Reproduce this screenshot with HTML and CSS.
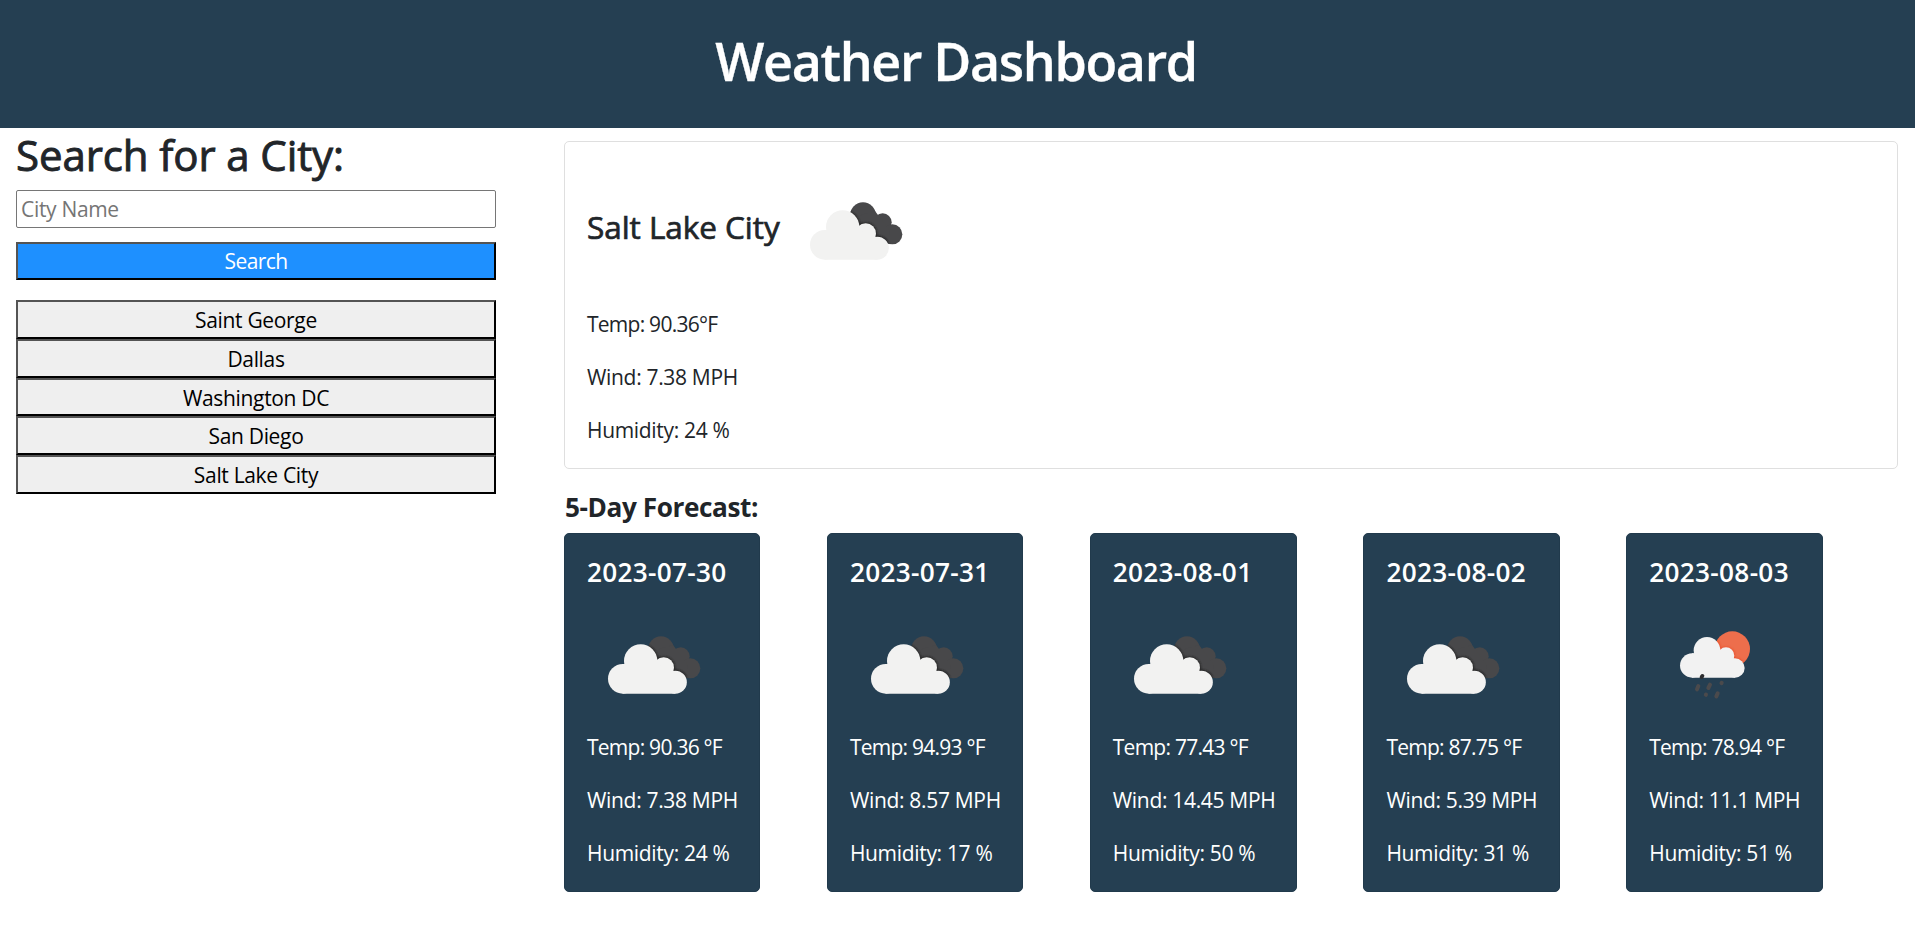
FILE: index.html
```html
<!DOCTYPE html>
<html lang="en">
<head>
<meta charset="utf-8">
<title>Weather Dashboard</title>
<link rel="stylesheet" href="styles.css">
</head>
<body>
<svg class="sprite" width="0" height="0" aria-hidden="true">
  <defs>
    <filter id="soft" x="-20%" y="-20%" width="140%" height="140%"><feGaussianBlur stdDeviation="3"/></filter>
    <g id="backcloud">
      <circle cx="214" cy="103" r="39"/><circle cx="273" cy="124" r="27"/><circle cx="302" cy="160" r="30"/>
      <path d="M180 110L250 90L295 150L290 188L220 170Z"/>
    </g>
    <g id="frontcloud">
      <circle cx="99.5" cy="191.5" r="44.5"/><circle cx="153" cy="138" r="50"/><circle cx="222" cy="158" r="31"/><circle cx="257" cy="201.5" r="34.5"/>
      <path d="M99 147H200L257 170V236H99Z"/>
    </g>
    <g id="raincloud">
      <circle cx="84.5" cy="150.5" r="36.5"/><circle cx="129" cy="105" r="40"/><circle cx="186" cy="121" r="25"/><circle cx="213" cy="158" r="29"/>
      <path d="M84 114H175L213 131V187H84Z"/>
    </g>
    <clipPath id="backclip"><circle cx="214" cy="103" r="39"/><circle cx="273" cy="124" r="27"/><circle cx="302" cy="160" r="30"/><path d="M180 110L250 90L295 150L290 188L220 170Z"/></clipPath>
    <clipPath id="sunclip"><circle cx="205" cy="101" r="53"/></clipPath>
    <symbol id="clouds" viewBox="-8 -39 400 360">
      <use href="#backcloud" fill="#48484a"/>
      <g clip-path="url(#backclip)"><use href="#frontcloud" fill="#222224" stroke="#222224" stroke-width="5" filter="url(#soft)"/></g>
      <use href="#frontcloud" fill="#f2f2f1"/>
    </symbol>
    <symbol id="rain" viewBox="-45 -40 400 360">
      <circle cx="205" cy="101" r="53" fill="#ed6e4c"/>
      <g clip-path="url(#sunclip)"><use href="#raincloud" fill="#ea4f2c" stroke="#ea4f2c" stroke-width="4" filter="url(#soft)"/></g>
      <use href="#raincloud" fill="#f2f2f2"/>
      <g stroke="#4b4a4c" stroke-width="12" stroke-linecap="round">
        <path d="M115 182L113 185" stroke="#2e2e30"/>
        <path d="M103 212L99 222M138 208L133 218M173 202.500L172.500 203.500M126 237.500L125.500 238.500M161 234L157 243"/>
      </g>
    </symbol>
  </defs>
</svg>
<header class="header"><h1 class="title">Weather Dashboard</h1></header>
<main class="layout">
  <aside class="sidebar">
    <h2 class="search-title">Search for a City:</h2>
    <input class="city-input" type="text" placeholder="City Name">
    <button class="btn search-btn">Search</button>
    <div class="history">
      <button class="btn">Saint George</button>
      <button class="btn">Dallas</button>
      <button class="btn">Washington DC</button>
      <button class="btn">San Diego</button>
      <button class="btn">Salt Lake City</button>
    </div>
  </aside>
  <section class="content">
    <article class="card current">
      <div class="current-head"><h3 class="city">Salt Lake City</h3><svg class="icon"><use href="#clouds"/></svg></div>
      <p class="temp">Temp: 90.36°F</p><p>Wind: 7.38 MPH</p><p>Humidity: 24 %</p>
    </article>
    <h4 class="forecast-title">5-Day Forecast:</h4>
    <div class="forecast">
      <article class="card day"><h5 class="date">2023-07-30</h5><svg class="icon"><use href="#clouds"/></svg><p class="temp">Temp: 90.36 °F</p><p>Wind: 7.38 MPH</p><p>Humidity: 24 %</p></article>
      <article class="card day"><h5 class="date">2023-07-31</h5><svg class="icon"><use href="#clouds"/></svg><p class="temp">Temp: 94.93 °F</p><p>Wind: 8.57 MPH</p><p>Humidity: 17 %</p></article>
      <article class="card day day-wide"><h5 class="date">2023-08-01</h5><svg class="icon"><use href="#clouds"/></svg><p class="temp">Temp: 77.43 °F</p><p>Wind: 14.45 MPH</p><p>Humidity: 50 %</p></article>
      <article class="card day"><h5 class="date">2023-08-02</h5><svg class="icon"><use href="#clouds"/></svg><p class="temp">Temp: 87.75 °F</p><p>Wind: 5.39 MPH</p><p>Humidity: 31 %</p></article>
      <article class="card day"><h5 class="date">2023-08-03</h5><svg class="icon"><use href="#rain"/></svg><p class="temp">Temp: 78.94 °F</p><p>Wind: 11.1 MPH</p><p>Humidity: 51 %</p></article>
    </div>
  </section>
</main>
</body>
</html>
```
FILE: styles.css
```css
* { box-sizing: border-box; }
body { margin: 0; background: #fff; color: #212529; font: 400 21px/32px "Open Sans", "Noto Sans", sans-serif; letter-spacing: -0.32px; }
h1, h2, h3, h4, h5, p { margin: 0; }
.sprite { display: block; }
.header { height: 128px; padding: 0 3px 6px 0; background: #253f52; color: #fff; display: flex; align-items: center; justify-content: center; }
.title { font-size: 52px; line-height: 64px; font-weight: 600; letter-spacing: -1.35px; -webkit-text-stroke: 0.3px; }
.layout { display: flex; align-items: flex-start; }
.sidebar { width: 564px; padding: 2px 68px 0 16px; display: flex; flex-direction: column; }
.search-title { font-size: 42px; line-height: 50px; font-weight: 400; letter-spacing: -0.1px; -webkit-text-stroke: 0.9px; margin-bottom: 10px; }
.city-input { height: 38px; font: inherit; letter-spacing: inherit; color: #000; border: 1px solid #767676; border-radius: 2px; padding: 0 4px; margin: 0 0 14px; }
.city-input::placeholder { color: #757575; opacity: 1; }
.btn { height: 38.67px; padding: 1px 0 0; border: 2px outset #000; background: #efefef; color: #000; font: inherit; line-height: 32px; letter-spacing: -0.33px; }
.search-btn { height: 38px; padding: 0; background: #1e90ff; color: #fff; letter-spacing: -0.6px; margin-bottom: 20.400px; }
.history { display: flex; flex-direction: column; }
.content { flex: 1; padding: 13px 17px 0 0; }
.card { border: 1px solid #dfdfdf; border-radius: 5px; padding: 21px 22px; }
.card p { white-space: nowrap; }
.card p + p { margin-top: 21px; }
.card .temp { letter-spacing: -0.75px; }
.icon { display: block; width: 133.33px; height: 120px; flex: none; }
.current { height: 328px; padding-top: 26px; }
.current-head { display: flex; align-items: center; gap: 9.500px; margin-bottom: 20px; }
.city { font-size: 31.500px; line-height: 36px; padding-bottom: 2px; font-weight: 400; letter-spacing: -0.05px; -webkit-text-stroke: 0.7px; }
.forecast-title { font-size: 26.200px; line-height: 32px; font-weight: 700; letter-spacing: -0.42px; padding-left: 1px; margin: 22px 0 10px; }
.forecast { display: flex; gap: 66.600px; }
.day { width: 196.300px; height: 359px; padding-top: 22px; background: #253f52; border-color: #213a4c; color: #fff; }
.day-wide { width: 207px; }
.day .icon { margin: 14.400px 0 9px; }
.date { font-size: 26.200px; line-height: 32px; font-weight: 600; letter-spacing: 0.3px; }
```
